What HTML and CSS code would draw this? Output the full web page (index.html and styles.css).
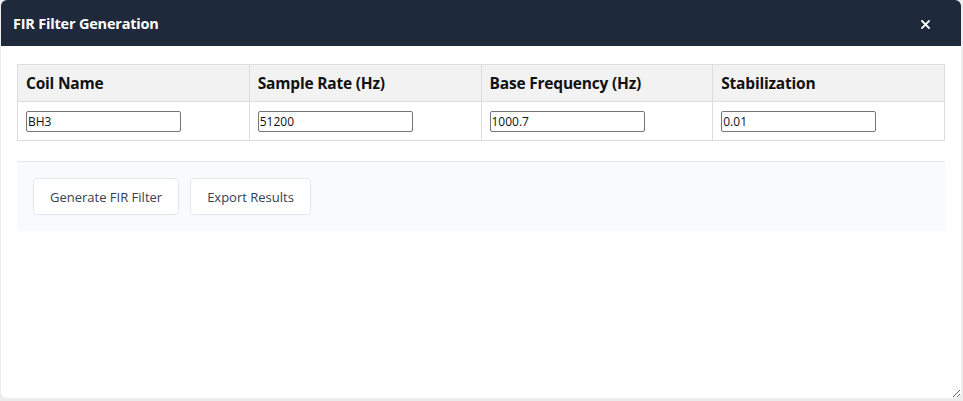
FILE: index.html
```html
<!DOCTYPE html>
<html>
<head>
<meta charset="utf-8">
<link rel="stylesheet" href="styles.css">
</head>
<body>
<div class="dialog">
  <div class="dialog-header">
    <span class="dialog-title">FIR Filter Generation</span>
    <button class="close-btn" aria-label="Close">
      <svg width="9" height="9" viewBox="0 0 9 9"><path d="M1 1L8 8M8 1L1 8" stroke="#fff" stroke-width="1.8" stroke-linecap="square"/></svg>
    </button>
  </div>
  <div class="dialog-body">
    <table class="params">
      <thead>
        <tr><th>Coil Name</th><th>Sample Rate (Hz)</th><th>Base Frequency (Hz)</th><th>Stabilization</th></tr>
      </thead>
      <tbody>
        <tr>
          <td><input type="text" value="BH3"></td>
          <td><input type="text" value="51200"></td>
          <td><input type="text" value="1000.7"></td>
          <td><input type="text" value="0.01"></td>
        </tr>
      </tbody>
    </table>
    <div class="actions">
      <button class="btn">Generate FIR Filter</button>
      <button class="btn">Export Results</button>
    </div>
  </div>
</div>
</body>
</html>
```
FILE: styles.css
```css
html, body {
  margin: 0;
  padding: 0;
  background: #ececec;
  height: 401px;
  overflow: hidden;
}
body {
  font-family: "Open Sans", "Noto Sans", sans-serif;
}
.dialog {
  margin-left: 1px;
  width: 960px;
  height: 398px;
  background: #fff;
  border-radius: 6px;
  overflow: auto;
  resize: both;
  box-sizing: border-box;
}
.dialog-header {
  height: 46px;
  background: #1e293b;
  display: flex;
  align-items: center;
  justify-content: space-between;
  padding: 0 31px 0 12px;
}
.dialog-title {
  color: #fff;
  font-weight: 700;
  font-size: 14.5px;
  letter-spacing: -0.2px;
}
.close-btn {
  background: none;
  border: 0;
  padding: 0;
  width: 9px;
  height: 9px;
  display: flex;
  margin-top: 2px;
}
.dialog-body {
  padding: 18px 16px 0 16px;
}
.params {
  width: 928px;
  border-collapse: collapse;
  table-layout: fixed;
  border: 1px solid #dddddd;
}
.params th, .params td {
  border: 1px solid #dddddd;
  text-align: left;
  padding: 0 8px;
}
.params th {
  background: #f2f2f2;
  height: 36px;
  font-size: 15.5px;
  font-weight: 700;
  color: #111;
  letter-spacing: -0.2px;
}
.params td {
  height: 38px;
}
.params input {
  width: 155px;
  height: 21px;
  box-sizing: border-box;
  border: 1px solid #767676;
  border-radius: 2px;
  padding: 0 1px;
  font-family: "Open Sans", "Noto Sans", sans-serif;
  font-size: 12px;
  color: #111;
  display: block;
  margin-top: 1px;
}
.actions {
  margin-top: 20px;
  border-top: 1px solid #e2e8f0;
  background: #f8fafc;
  padding: 16px;
  display: flex;
  gap: 11px;
  width: 928px;
  box-sizing: border-box;
}
.btn {
  height: 37px;
  background: #fff;
  border: 1px solid #e2e8f0;
  border-radius: 4px;
  padding: 0 16px;
  font-family: "Open Sans", "Noto Sans", sans-serif;
  font-size: 13px;
  color: #334155;
}
```
